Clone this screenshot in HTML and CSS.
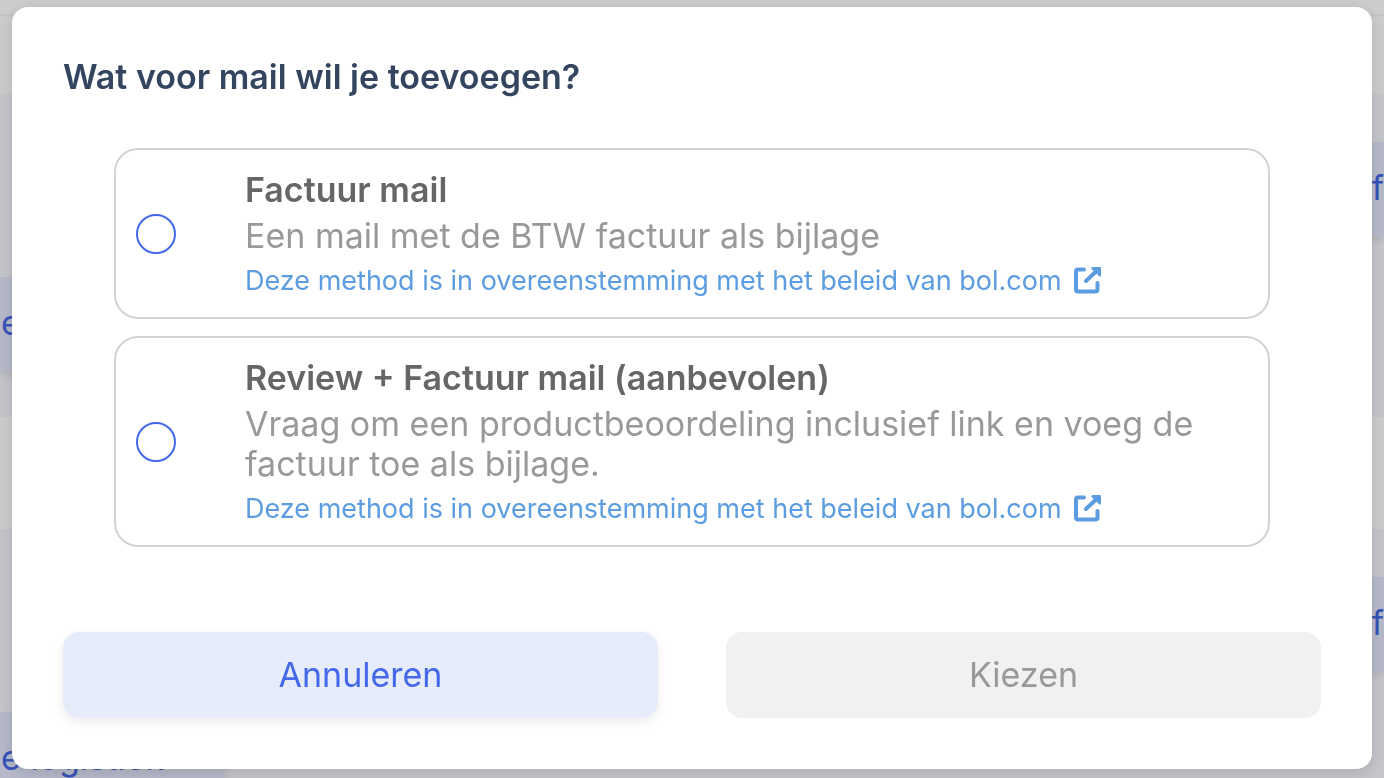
FILE: index.html
```html
<!DOCTYPE html>
<html lang="nl">
<head>
    <meta charset="UTF-8">
    <meta name="viewport" content="width=device-width, initial-scale=1.0">
    <title>Mail toevoegen</title>
    <link rel="stylesheet" href="styles.css">
</head>
<body>
    <div class="page">
        <header class="topbar"></header>
        <main class="panels">
            <section class="panel">
                <button type="button" class="panel-btn panel-btn-left">e logistiek</button>
                <button type="button" class="panel-btn panel-btn-right">f</button>
            </section>
            <section class="panel">
                <button type="button" class="panel-btn panel-btn-left">e logistiek</button>
                <button type="button" class="panel-btn panel-btn-right">f</button>
            </section>
        </main>
    </div>

    <div class="overlay">
        <form class="modal" role="dialog" aria-labelledby="modal-title">
            <h2 class="modal-title" id="modal-title">Wat voor mail wil je toevoegen?</h2>

            <div class="options">
                <div class="option">
                    <input class="option-radio" type="radio" name="mail" id="mail-factuur">
                    <div class="option-body">
                        <label class="option-title" for="mail-factuur">Factuur mail</label>
                        <p class="option-text">Een mail met de BTW factuur als bijlage</p>
                        <a class="option-link" href="#">Deze method is in overeenstemming met het beleid van bol.com
                            <svg class="link-icon" viewBox="0 0 28 28" aria-hidden="true">
                                <path d="M10 3.500H4Q2 3.500 2 5.500V23.500Q2 25.500 4 25.500H21.500Q23.500 25.500 23.500 23.500V17"/>
                                <path d="M12 15L22 5.500"/>
                                <path class="arrow" d="M18.500 1H26Q27 1 27 2V9.500Q27 11 25.500 10.500L17.500 3Q17 1 18.500 1Z"/>
                            </svg>
                        </a>
                    </div>
                </div>

                <div class="option">
                    <input class="option-radio" type="radio" name="mail" id="mail-review">
                    <div class="option-body">
                        <label class="option-title" for="mail-review">Review + Factuur mail (aanbevolen)</label>
                        <p class="option-text">Vraag om een productbeoordeling inclusief link en voeg de factuur toe als bijlage.</p>
                        <a class="option-link" href="#">Deze method is in overeenstemming met het beleid van bol.com
                            <svg class="link-icon" viewBox="0 0 28 28" aria-hidden="true">
                                <path d="M10 3.500H4Q2 3.500 2 5.500V23.500Q2 25.500 4 25.500H21.500Q23.500 25.500 23.500 23.500V17"/>
                                <path d="M12 15L22 5.500"/>
                                <path class="arrow" d="M18.500 1H26Q27 1 27 2V9.500Q27 11 25.500 10.500L17.500 3Q17 1 18.500 1Z"/>
                            </svg>
                        </a>
                    </div>
                </div>
            </div>

            <div class="actions">
                <button type="button" class="btn btn-cancel">Annuleren</button>
                <button type="submit" class="btn btn-choose" disabled>Kiezen</button>
            </div>
        </form>
    </div>
</body>
</html>
```

FILE: styles.css
```css
* {
    box-sizing: border-box;
}

body {
    margin: 0;
    font-family: Inter, "Liberation Sans", sans-serif;
    background: #fff;
}

button,
input {
    font-family: inherit;
}

/* page behind the modal */
.page {
    height: 100vh;
    overflow: hidden;
}

.topbar {
    height: 16px;
    border-bottom: 2px solid #f4f4f4;
}

.panels {
    display: flex;
    flex-direction: column;
    gap: 112px;
    padding-top: 78px;
}

.panel {
    display: flex;
    flex-shrink: 0;
    justify-content: space-between;
    height: 323px;
    padding: 48px 0 46px;
    background: #f6f8fe;
}

.panel-btn {
    width: 224px;
    height: 94px;
    padding: 0 0 4px;
    border: 0;
    background: #e4e8fd;
    box-shadow: 0 4px 8px rgba(0, 0, 0, 0.1);
    color: #4469e8;
    font-size: 34px;
}

.panel-btn-left {
    align-self: flex-end;
    padding-left: 1px;
    text-align: left;
}

.panel-btn-right {
    text-align: right;
}

/* modal */
.overlay {
    position: fixed;
    inset: 0;
    padding: 7px 12px;
    overflow: auto;
    background: rgba(0, 0, 0, 0.2);
}

.modal {
    padding: 48px 51px 51px;
    border-radius: 16px;
    background: #fff;
    box-shadow: 0 4px 16px rgba(0, 0, 0, 0.14);
}

.modal-title {
    margin: 0;
    color: #34455f;
    font-size: 34px;
    font-weight: 600;
    line-height: 44px;
}

.options {
    display: flex;
    flex-direction: column;
    gap: 17px;
    padding: 49px 51px 85px;
}

.option {
    display: flex;
    align-items: center;
    gap: 69px;
    padding: 18px 20px;
    border: 2px solid #d3d3d3;
    border-radius: 24px;
}

.option-radio {
    flex-shrink: 0;
    width: 40px;
    height: 40px;
    margin: 0;
    appearance: none;
    border: 2px solid #4468ea;
    border-radius: 50%;
}

.option-radio:checked {
    background: #4468ea;
    box-shadow: inset 0 0 0 6px #fff;
}

.option-title {
    display: block;
    color: #666;
    font-size: 34px;
    font-weight: 600;
    line-height: 43px;
}

.option-text {
    margin: 5px 0 6px;
    color: #999;
    font-size: 34px;
    line-height: 40px;
}

.option-link {
    display: flex;
    align-items: center;
    gap: 12px;
    color: #5c9ce0;
    font-size: 27px;
    line-height: 37px;
    text-decoration: none;
}

.link-icon {
    flex-shrink: 0;
    width: 28px;
    height: 28px;
    margin-bottom: 2px;
    fill: none;
    stroke: currentColor;
    stroke-width: 4;
    stroke-linecap: round;
}

.link-icon .arrow {
    fill: currentColor;
    stroke: none;
}

.actions {
    display: grid;
    grid-template-columns: 1fr 1fr;
    gap: 68px;
}

.btn {
    height: 86px;
    padding: 0 0 2px;
    border: 0;
    border-radius: 16px;
    font-size: 34px;
}

.btn-cancel {
    background: #e6ecf9;
    box-shadow: 0 4px 12px rgba(0, 0, 0, 0.08);
    color: #4468ea;
}

.btn-choose {
    background: #f1f1f1;
    color: #999;
}
```
